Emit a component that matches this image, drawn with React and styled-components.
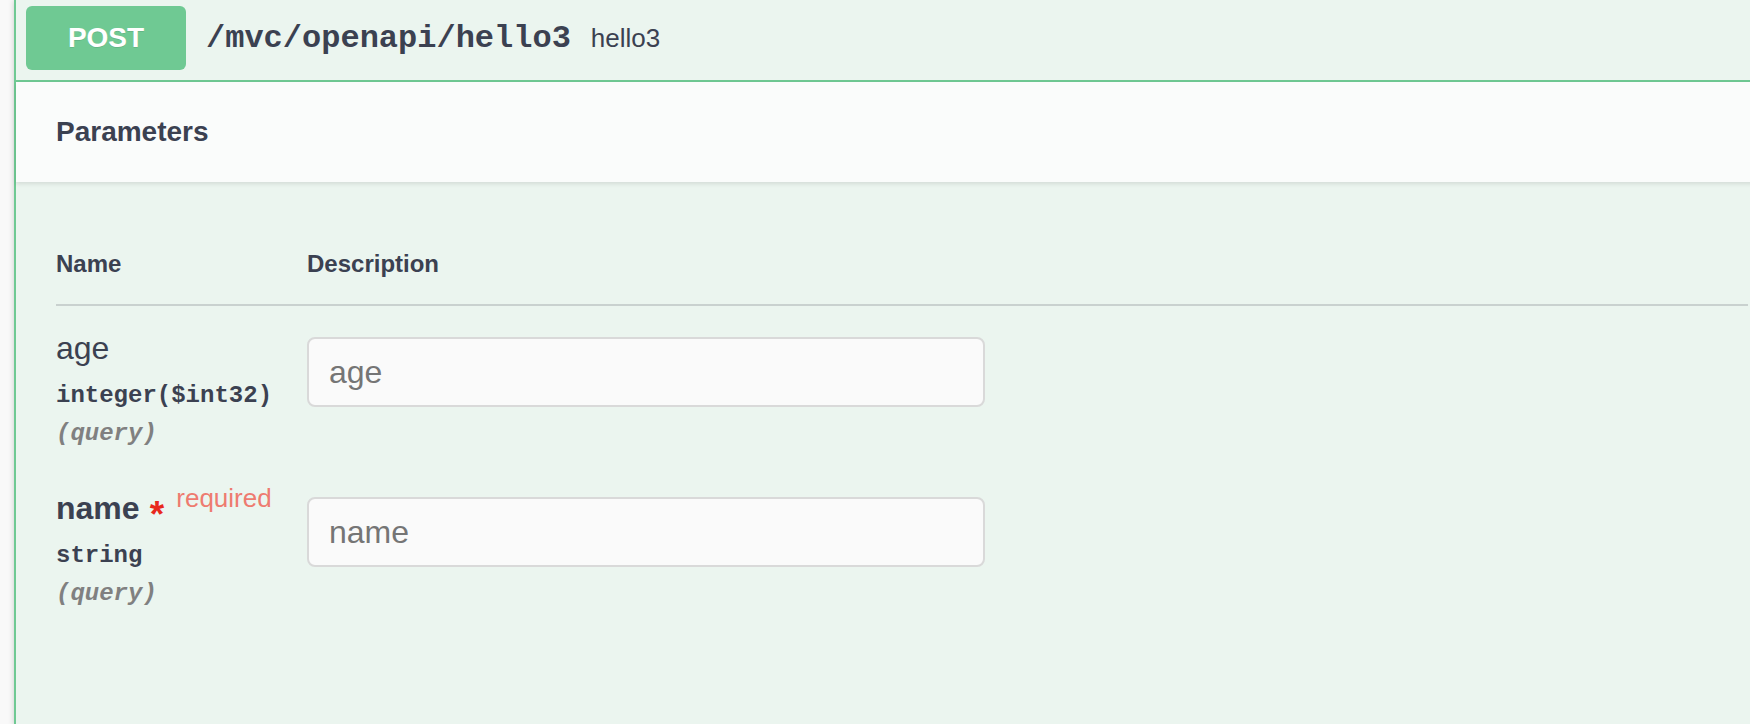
import React from "react";
import styled, { createGlobalStyle } from "styled-components";

const GlobalStyle = createGlobalStyle`
  html, body {
    margin: 0;
    padding: 0;
    background: #f9f9f9;
    overflow: hidden;
  }
  body {
    font-family: "Liberation Sans", Arial, sans-serif;
    color: #3b4151;
  }
`;

const Opblock = styled.div`
  margin: 0 -40px 0 14px;
  min-height: 724px;
  background: #ebf5ef;
  border: 2px solid #6fc993;
  border-top: none;
  box-shadow: 0 0 6px rgba(0, 0, 0, 0.19);
`;

const Summary = styled.div`
  display: flex;
  align-items: center;
  padding: 6px 10px 10px;
  border-bottom: 2px solid #6fc993;
`;

const Method = styled.span`
  display: flex;
  align-items: center;
  justify-content: center;
  min-width: 160px;
  height: 64px;
  border-radius: 6px;
  background: #6fc993;
  color: #fff;
  font-size: 28px;
  font-weight: 700;
  text-shadow: 0 1px 0 rgba(0, 0, 0, 0.1);
`;

const Path = styled.span`
  padding: 0 20px;
  font-family: "Liberation Mono", "Courier New", monospace;
  font-size: 32px;
  font-weight: 700;
  color: #3b4151;
`;

const Description = styled.span`
  font-size: 26px;
  color: #3b4151;
`;

const SectionHeader = styled.div`
  display: flex;
  align-items: center;
  min-height: 100px;
  padding: 0 40px;
  background: #fafcfb;
  box-shadow: 0 2px 4px rgba(0, 0, 0, 0.1);
`;

const SectionTitle = styled.h4`
  margin: 0;
  font-size: 28px;
  font-weight: 700;
  color: #3b4151;
`;

const TableContainer = styled.div`
  padding: 40px 40px 0;
`;

const Table = styled.table`
  width: 100%;
  border-collapse: collapse;
`;

const Th = styled.th`
  width: ${({ $width }) => $width || "auto"};
  padding: 28px 0 26px;
  border-bottom: 2px solid #c9d1cf;
  font-size: 24px;
  line-height: 28px;
  font-weight: 700;
  text-align: left;
  color: #3b4151;
`;

const Td = styled.td`
  padding: 22px 0 18px;
  vertical-align: top;
`;

const ParamName = styled.div`
  font-size: 32px;
  line-height: 40px;
  font-weight: ${({ $required }) => ($required ? 700 : 400)};
  color: #3b4151;
  white-space: nowrap;
`;

const Star = styled.span`
  position: relative;
  top: 8px;
  font-size: 37px;
  line-height: 0;
  color: #e8281c;
`;

const Required = styled.span`
  position: relative;
  top: -12px;
  padding-left: 12px;
  font-size: 26px;
  line-height: 0;
  font-weight: 400;
  color: #ee7b70;
`;

const ParamType = styled.div`
  padding-top: 14px;
  font-family: "Liberation Mono", "Courier New", monospace;
  font-size: 24px;
  line-height: 28px;
  font-weight: 700;
  color: #3b4151;
`;

const ParamIn = styled.div`
  padding-top: 10px;
  font-family: "Liberation Mono", "Courier New", monospace;
  font-size: 24px;
  line-height: 28px;
  font-weight: 700;
  font-style: italic;
  color: #808080;
`;

const Input = styled.input`
  box-sizing: border-box;
  display: block;
  width: 678px;
  height: 70px;
  margin-top: 9px;
  padding: 0 20px;
  border: 2px solid #d9d9d9;
  border-radius: 8px;
  background: #fafafa;
  font-family: "Liberation Sans", Arial, sans-serif;
  font-size: 32px;
  color: #3b4151;
  outline: none;

  &::placeholder {
    color: #757575;
  }
`;

const params = [
  { name: "age", type: "integer($int32)", in: "query", required: false },
  { name: "name", type: "string", in: "query", required: true },
];

export default function App() {
  return (
    <>
      <GlobalStyle />
      <Opblock>
        <Summary>
          <Method>POST</Method>
          <Path>/mvc/openapi/hello3</Path>
          <Description>hello3</Description>
        </Summary>
        <SectionHeader>
          <SectionTitle>Parameters</SectionTitle>
        </SectionHeader>
        <TableContainer>
          <Table>
            <thead>
              <tr>
                <Th $width="251px">Name</Th>
                <Th>Description</Th>
              </tr>
            </thead>
            <tbody>
              {params.map((p) => (
                <tr key={p.name}>
                  <Td>
                    <ParamName $required={p.required}>
                      {p.name}
                      {p.required && (
                        <>
                          <Star>&nbsp;*</Star>
                          <Required>required</Required>
                        </>
                      )}
                    </ParamName>
                    <ParamType>{p.type}</ParamType>
                    <ParamIn>({p.in})</ParamIn>
                  </Td>
                  <Td>
                    <Input type="text" placeholder={p.name} />
                  </Td>
                </tr>
              ))}
            </tbody>
          </Table>
        </TableContainer>
      </Opblock>
    </>
  );
}
